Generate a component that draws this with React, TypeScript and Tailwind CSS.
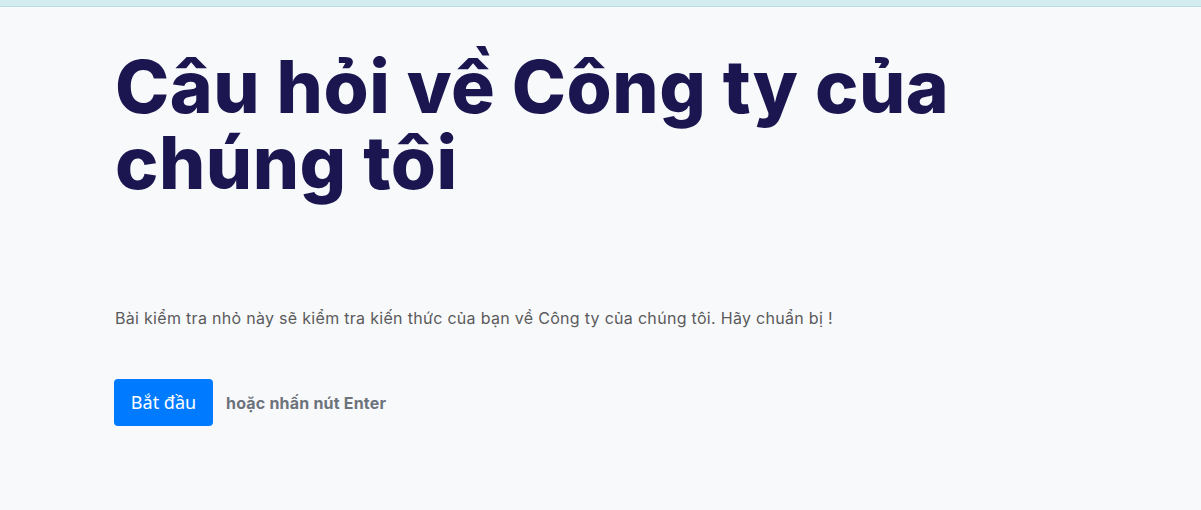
export default function App() {
    return (
        <div className="min-h-[510px] bg-[#f8f9fb]" style={{ fontFamily: 'Inter, "Noto Sans", sans-serif' }}>
            <div className="h-[7px] bg-[#d3ecf0] border-b border-[#b9dfe4]" />
            <main className="pl-[115px] pt-[42px]">
                <h1 className="text-[73px] leading-[76px] font-extrabold text-[#1b1650] tracking-[0.5px] w-[900px]">
                    Câu hỏi về Công ty của chúng tôi
                </h1>
                <p className="mt-[105px] text-[16px] leading-[24px] tracking-[0.3px] text-[#5b5b5b]">
                    Bài kiểm tra nhỏ này sẽ kiểm tra kiến thức của bạn về Công ty của chúng tôi. Hãy chuẩn bị !
                </p>
                <div className="mt-[49px] flex items-center gap-[13px] -ml-px">
                    <button className="h-[47px] w-[99px] rounded-[4px] bg-[#007bff] text-white text-[18px]" style={{ fontFamily: '"Noto Sans", sans-serif' }}>
                        Bắt đầu
                    </button>
                    <span className="text-[16px] tracking-[0.2px] font-bold text-[#6c737b]">hoặc nhấn nút Enter</span>
                </div>
            </main>
        </div>
    );
}
